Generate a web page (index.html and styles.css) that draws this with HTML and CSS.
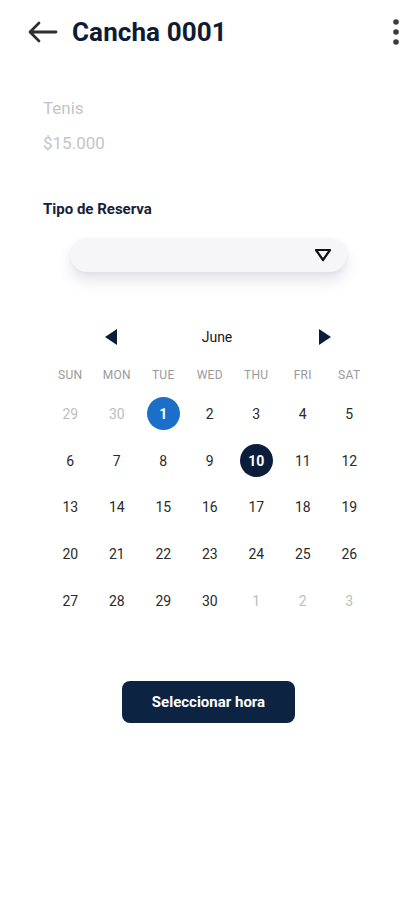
FILE: index.html
```html
<!DOCTYPE html>
<html lang="es">
<head>
<meta charset="utf-8">
<title>Cancha 0001</title>
<link rel="stylesheet" href="styles.css">
</head>
<body>
<div class="screen">
  <header class="topbar">
    <svg class="back" width="30" height="22" viewBox="0 0 30 22" fill="none" stroke="#2e2e33" stroke-width="2.8" stroke-linecap="round" stroke-linejoin="round"><path d="M28 11H3M11 2L2 11L11 20"/></svg>
    <h1 class="title">Cancha 0001</h1>
    <svg class="kebab" width="8" height="26" viewBox="0 0 8 26"><circle cx="4" cy="3" r="2.8" fill="#3a3a40"/><circle cx="4" cy="13" r="2.8" fill="#3a3a40"/><circle cx="4" cy="23" r="2.8" fill="#3a3a40"/></svg>
  </header>

  <section class="info">
    <p class="muted">Tenis</p>
    <p class="muted">$15.000</p>
  </section>

  <h2 class="label">Tipo de Reserva</h2>
  <div class="select">
    <svg width="18" height="14" viewBox="0 0 18 14" fill="none" stroke="#111" stroke-width="2.2" stroke-linejoin="round"><path d="M2 2H16L9 12Z"/></svg>
  </div>

  <section class="calendar">
    <div class="month">
      <svg width="14" height="18" viewBox="0 0 14 18"><path d="M13 1V17L1 9Z" fill="#0b1d3a"/></svg>
      <span>June</span>
      <svg width="14" height="18" viewBox="0 0 14 18"><path d="M1 1V17L13 9Z" fill="#0b1d3a"/></svg>
    </div>
    <div class="dows">
      <span>SUN</span><span>MON</span><span>TUE</span><span>WED</span><span>THU</span><span>FRI</span><span>SAT</span>
    </div>
    <div class="grid">
      <span class="day out">29</span><span class="day out">30</span><span class="day today">1</span><span class="day">2</span><span class="day">3</span><span class="day">4</span><span class="day">5</span>
      <span class="day">6</span><span class="day">7</span><span class="day">8</span><span class="day">9</span><span class="day sel">10</span><span class="day">11</span><span class="day">12</span>
      <span class="day">13</span><span class="day">14</span><span class="day">15</span><span class="day">16</span><span class="day">17</span><span class="day">18</span><span class="day">19</span>
      <span class="day">20</span><span class="day">21</span><span class="day">22</span><span class="day">23</span><span class="day">24</span><span class="day">25</span><span class="day">26</span>
      <span class="day">27</span><span class="day">28</span><span class="day">29</span><span class="day">30</span><span class="day out">1</span><span class="day out">2</span><span class="day out">3</span>
    </div>
  </section>

  <div class="actions">
    <button class="btn">Seleccionar hora</button>
  </div>
</div>
</body>
</html>
```
FILE: styles.css
```css
* { box-sizing: border-box; }
html, body { margin: 0; padding: 0; background: #fff; }
body { font-family: Roboto, "Noto Sans", "Liberation Sans", sans-serif; color: #222; }
.screen { width: 415px; min-height: 900px; background: #fff; }

.topbar {
  display: flex;
  align-items: center;
  height: 40px;
  margin-top: 12px;
  padding: 0 15px 0 28px;
}
.back { flex: none; }
.title {
  margin: 0 0 0 14px;
  font-size: 26px;
  font-weight: 700;
  color: #0d1b33;
  flex: 1;
  letter-spacing: 0.1px;
}
.kebab { flex: none; }

.info { padding: 46px 43px 0; }
.muted { margin: 0; font-size: 17px; color: #c4c4c6; line-height: 20px; }
.muted + .muted { margin-top: 15px; }

.label {
  margin: 47px 0 0 43px;
  font-size: 15px;
  font-weight: 700;
  color: #152238;
  line-height: 18px;
}
.select {
  margin: 20px 68px 0 70px;
  height: 34px;
  border-radius: 17px;
  background: #f6f6f9;
  box-shadow: 0 9px 14px rgba(60, 60, 110, 0.13), 0 2px 4px rgba(60,60,110,0.06);
  display: flex;
  align-items: center;
  justify-content: flex-end;
  padding-right: 15px;
}

.calendar { margin: 55px 43px 0 47px; }
.month {
  display: flex;
  align-items: center;
  justify-content: space-between;
  padding: 0 40px 0 57px;
  height: 20px;
  font-size: 14px;
  color: #1a1a1a;
}
.month span { margin-left: -2px; }
.dows {
  display: grid;
  grid-template-columns: repeat(7, 46.5px);
  height: 20px;
  margin-top: 18px;
  align-items: center;
  justify-items: center;
  font-size: 12px;
  color: #9a9a9a;
  letter-spacing: 0.3px;
}
.grid {
  display: grid;
  grid-template-columns: repeat(7, 46.5px);
  grid-auto-rows: 46.7px;
  margin-top: 5.6px;
}
.day {
  display: flex;
  align-items: center;
  justify-content: center;
  font-size: 14px;
  color: #2a2a2a;
}
.day.out { color: #bdbdbd; }
.day.today, .day.sel {
  width: 33px;
  height: 33px;
  border-radius: 50%;
  justify-self: center;
  align-self: center;
  color: #fff;
  font-weight: 700;
}
.day.today { background: #1b6fc8; }
.day.sel { background: #0b1d3a; }

.actions { display: flex; justify-content: center; margin-top: 56.6px; padding-left: 2px; }
.btn {
  width: 173px;
  height: 42px;
  border: none;
  border-radius: 8px;
  background: #0c2342;
  color: #fff;
  font-family: Roboto, "Liberation Sans", sans-serif;
  font-size: 15px;
  font-weight: 700;
  letter-spacing: 0;
}
```
